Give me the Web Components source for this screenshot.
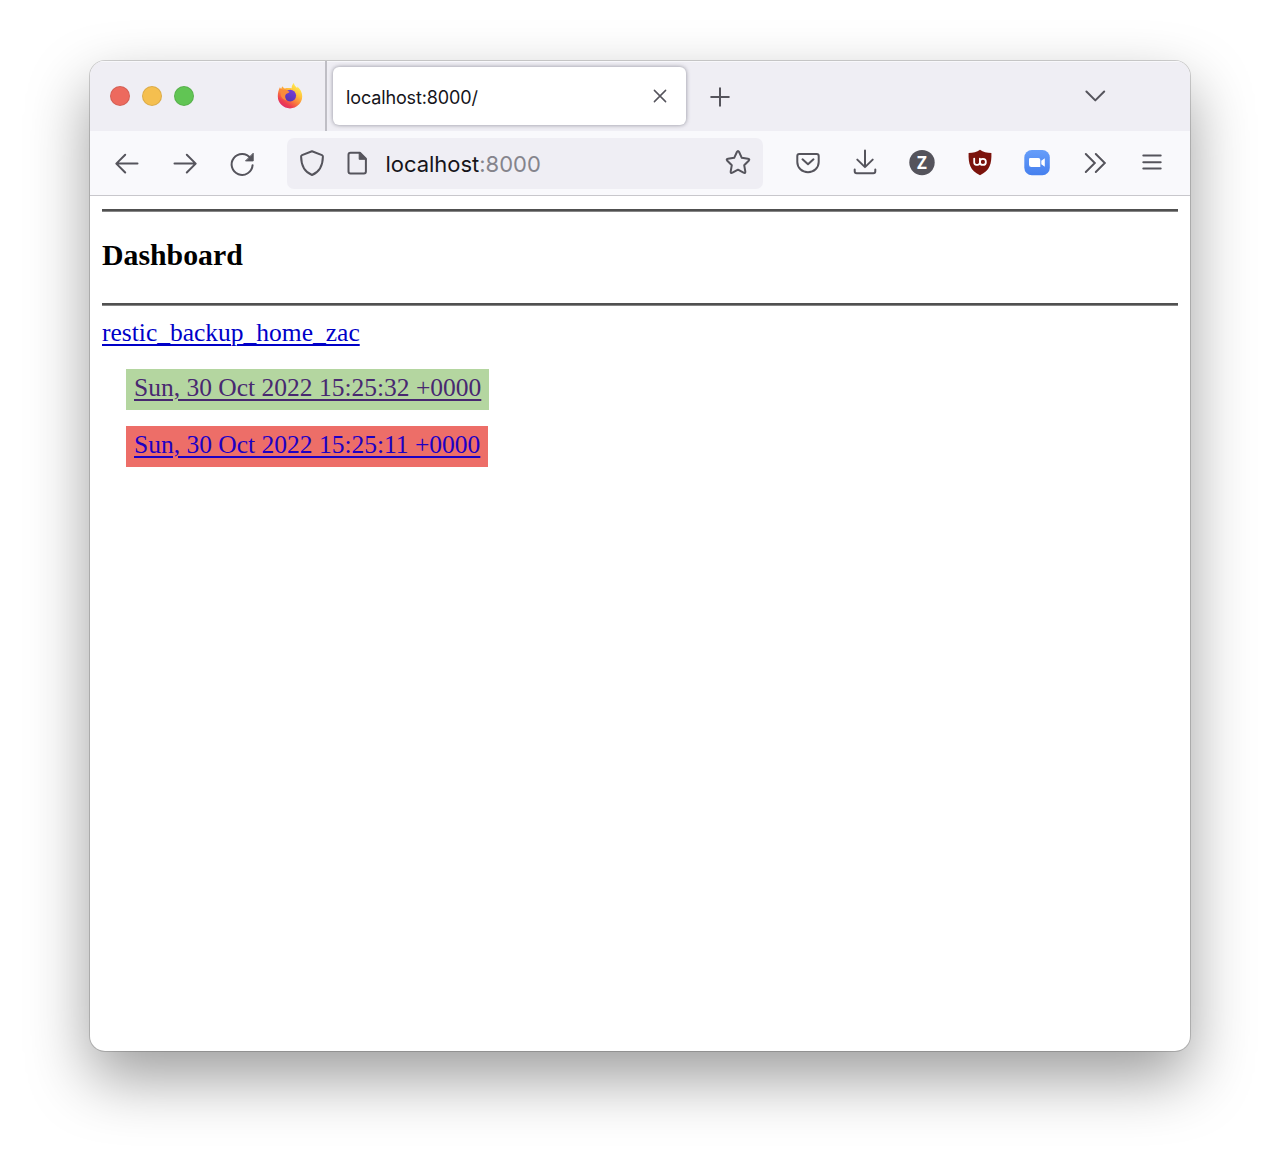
<!DOCTYPE html>
<html lang="en">
<head>
<meta charset="utf-8">
<title>localhost:8000/</title>
<style>
html,body{margin:0;height:1170px;background:#fff;overflow:hidden}
body{padding:61px 90px 0;box-sizing:border-box}
</style>
</head>
<body>
<browser-window>
  <tab-strip slot="chrome"></tab-strip>
  <nav-toolbar slot="chrome"></nav-toolbar>
  <dashboard-page>
    <backup-run status="ok">Sun, 30 Oct 2022 15:25:32 +0000</backup-run>
    <backup-run status="failed">Sun, 30 Oct 2022 15:25:11 +0000</backup-run>
  </dashboard-page>
</browser-window>
<script>
const define = (name, html) => customElements.define(name, class extends HTMLElement {
  constructor() {
    super();
    this.attachShadow({mode: 'open'}).innerHTML = html;
  }
});

const ICONS = {
  back: '<path d="M26.500 16.600H5.700M14.200 7.800 5.300 16.600l8.900 8.900"/>',
  forward: '<path d="M5.500 16.600h20.800M17.800 7.800l8.900 8.800-8.900 8.900"/>',
  reload: '<path d="M24.600 11.200A10.500 10.500 0 1 0 26.600 18.200"/><path d="M27.200 6.600v7.300h-7.300z" fill="currentColor" stroke-width="1"/>',
  shield: '<path d="M16 4.200 26 8.100q.9.400.9 1.400c-.1 8.600-3.400 15.500-10.900 18.500C8.500 25 5.200 18.100 5.100 9.500q0-1 .9-1.400z"/>',
  page: '<path d="M9.500 5.700h9.400l6 6V24.500q0 2-2 2H9.500q-2 0-2-2V7.700q0-2 2-2z"/><path d="M18.200 5.700v6.600h6.600z" fill="currentColor" stroke-width="1"/>',
  star: '<path d="M14.900 5q1.100-2 2.200 0l2.700 5.800 6.200.9q2.200.4.700 2l-4.500 4.500 1.100 6.300q.2 2.200-1.800 1.200L16 22.700l-5.500 3q-2 1-1.800-1.200l1.100-6.300-4.500-4.500q-1.500-1.600.7-2l6.200-.9z"/>',
  pocket: '<path d="M7.300 6.900h17.400q2 0 2 2V15c0 5.900-4.700 10.200-10.700 10.200S5.300 20.900 5.300 15V8.900q0-2 2-2z"/><path d="m10.500 12.300 5.500 5 5.500-5"/>',
  download: '<path d="M16 3.600v16.300M8.300 12.600l7.700 7.500 7.700-7.500M5.700 22.500v1.700q0 2 2 2h16.600q2 0 2-2v-1.700"/>',
  zotero: '<circle cx="16" cy="15.600" r="12.700" fill="currentColor" stroke="none"/><text x="16" y="21.500" text-anchor="middle" fill="#fff" stroke="none" font-family="Open Sans,sans-serif" font-weight="700" font-size="17">Z</text>',
  ublock: '<path d="M16 2.800c3 2.100 7 3.200 11.400 3.300.3 10.600-1.400 17.600-11.400 22.100C6 23.700 4.300 16.700 4.600 6.100 9 6 13 4.900 16 2.800z" fill="#7b130c" stroke="none"/><g stroke="#fff" stroke-width="1.800"><path d="M10.200 11.600v4q0 2.200 2.200 2.200h1.200q2 0 2.300-2.200v-4"/><circle cx="18.900" cy="14.900" r="3"/></g>',
  zoom: '<defs><linearGradient id="z" x2="0" y2="1"><stop stop-color="#669efa"/><stop offset="1" stop-color="#4680ee"/></linearGradient></defs><rect x="3.300" y="3" width="25.500" height="25.300" rx="7.500" fill="url(#z)" stroke="none"/><path d="M9.500 11h7.800q2 0 2 2v7h-8.900q-2.400 0-2.400-2.300V11.800q0-.8 1.500-.8zM20.300 13.800l3.500-2.600v8.600l-3.500-2.600z" fill="#fff" stroke="none"/>',
  overflow: '<path d="m6.800 7 9 9-9 9M16.800 7l9 9-9 9" stroke-linejoin="miter"/>',
  menu: '<path d="M7.300 8.600h17.400M7.300 15.200h17.400M7.300 21.600h17.400"/>',
  close: '<path d="m10.400 10.400 11.200 11.200M21.600 10.400 10.400 21.600" stroke-width="1.500"/>',
  plus: '<path d="M16 7.200v17.600M7.200 16h17.600"/>',
  chevron: '<path d="m7.400 11.500 8.900 8.900 8.900-8.900"/>',
  firefox: `<defs>
    <linearGradient id="f" x1=".85" y1=".1" x2=".25" y2="1"><stop stop-color="#ffee4f"/><stop offset=".3" stop-color="#ffc23c"/><stop offset=".58" stop-color="#fa7d3c"/><stop offset=".8" stop-color="#ee3f50"/><stop offset="1" stop-color="#dc2a6c"/></linearGradient>
    <linearGradient id="p" x1=".8" y1="0" x2=".3" y2="1"><stop stop-color="#7a3ed8"/><stop offset="1" stop-color="#5335b4"/></linearGradient></defs>
    <g stroke="none"><path d="M19.900 3.100c.3 2.500 2 3.600 3.300 5.100.3-.7.100-1.300 0-1.800 3 2.200 5 6 5 9.800a12.200 12.200 0 0 1-24.400 0c0-3.300.8-6.300 2.100-8.900.4.900.9 1.300 1.300 1.700.1-1.200.7-1.700 1.700-2.700.1 1.200.8 1.900 1.800 2.100 2.900-.8 5.200-.4 7-.2-.1-2.200.9-4 2.200-5.100z" fill="url(#f)"/>
    <circle cx="16.200" cy="15.600" r="5.900" fill="url(#p)"/>
    <path d="M5.900 8.800c1.800 1.500 3.400.8 4.800.6 2 .3 3.400 1.500 4.900 2.300-.3 1.400-2.400 1.400-3.400 2.300-.9.800-1.200 2.200-.9 3.600.2 1 .7 2 1.400 2.800-2.700-.4-5.400-2.700-5.900-5.200z" fill="#f98a3b"/></g>`
};

customElements.define('ui-icon', class extends HTMLElement {
  connectedCallback() {
    if (this.shadowRoot) return;
    this.attachShadow({mode: 'open'}).innerHTML = `
      <style>:host{display:flex;justify-content:center;align-items:center;flex:none;color:#55545c}svg{display:block;width:32px;height:32px}</style>
      <svg viewBox="0 0 32 32" fill="none" stroke="currentColor" stroke-width="2" stroke-linecap="round" stroke-linejoin="round">${ICONS[this.getAttribute('name')]}</svg>`;
  }
});

define('browser-window', `
  <style>
    :host{display:flex;flex-direction:column;width:1100px;height:990px;border-radius:15px;overflow:hidden;background:#fff;
      box-shadow:0 0 0 1px rgba(0,0,0,.17),0 27px 62px rgba(0,0,0,.39)}
  </style>
  <slot name="chrome"></slot><slot></slot>`);

define('tab-strip', `
  <style>
    :host{display:flex;height:70px;flex:none;background:#efeef4;box-shadow:inset 0 1px #f8f8fb}
    .lights{display:flex;gap:12px;padding:25px 0 0 19.500px;width:152px;box-sizing:border-box}
    .lights i{width:20px;height:20px;border-radius:50%;box-sizing:border-box;border:1px solid rgba(0,0,0,.1)}
    .pinned{display:flex;width:85px;align-items:center;justify-content:center;border-right:2px solid #bfbec5;padding:0 0 1px 13px;box-sizing:border-box}
    .tab{display:flex;align-items:center;margin:6px 0 0 6px;width:353px;height:58px;border-radius:6px;background:#fff;box-shadow:0 0 4px rgba(90,90,105,.65);box-sizing:border-box;padding:0 10px 0 13px;color:#15141a;font:18px/24px Inter,sans-serif;letter-spacing:-.13px}
    .tab span{flex:1;padding-top:3px}
    .new{margin-left:18px;padding-top:2px}
    .list{margin-left:auto;margin-right:79px}
  </style>
  <div class="lights"><i style="background:#ed6a5e"></i><i style="background:#f5bf4f"></i><i style="background:#61c554"></i></div>
  <div class="pinned"><ui-icon name="firefox"></ui-icon></div>
  <div class="tab"><span>localhost:8000/</span><ui-icon name="close"></ui-icon></div>
  <ui-icon class="new" name="plus"></ui-icon>
  <ui-icon class="list" name="chevron"></ui-icon>`);

define('nav-toolbar', `
  <style>
    :host{display:flex;align-items:center;height:65px;flex:none;box-sizing:border-box;background:#f9f9fc;border-bottom:1px solid #c8c7cc;padding-left:8.600px}
    .b{width:57.400px}
    .url{display:flex;align-items:center;width:476px;height:51px;background:#efeef4;border-radius:7px;margin:0 16px 0 16.200px;box-sizing:border-box;padding:0 9px 0 9.500px;font:22px/30px Inter,sans-serif;color:#15141a}
    .url span{flex:1;white-space:nowrap;padding-top:1px;letter-spacing:-.02px}
    .page{margin:0 12.500px 0 12.500px}
    .url b{font-weight:400;color:#85848c}
  </style>
  <ui-icon class="b" name="back"></ui-icon><ui-icon class="b" name="forward"></ui-icon><ui-icon class="b" name="reload"></ui-icon>
  <div class="url"><ui-icon name="shield"></ui-icon><ui-icon class="page" name="page"></ui-icon><span>localhost<b>:8000</b></span><ui-icon name="star"></ui-icon></div>
  <ui-icon class="b" name="pocket"></ui-icon><ui-icon class="b" name="download"></ui-icon><ui-icon class="b" name="zotero"></ui-icon><ui-icon class="b" name="ublock"></ui-icon><ui-icon class="b" name="zoom"></ui-icon><ui-icon class="b" name="overflow"></ui-icon><ui-icon class="b" name="menu"></ui-icon>`);

define('dashboard-page', `
  <style>
    :host{display:block;flex:1;padding:13px 12px 0;font:25.500px/29px "Liberation Serif",serif;color:#000}
    hr{height:3px;border:0;margin:0;background:linear-gradient(#505050 0 2px,#868686 2px)}
    h3{margin:26px 0 32px;font-size:29.800px;line-height:33px}
    a{color:#0000c8;text-decoration:underline;text-decoration-thickness:2px;text-underline-offset:3px}
    .job{margin-top:12px;height:29px}
    .runs{display:flex;flex-direction:column;align-items:flex-start;gap:16px;margin:22px 0 0 24px}
  </style>
  <hr><h3>Dashboard</h3><hr>
  <div class="job"><a>restic_backup_home_zac</a></div>
  <div class="runs"><slot></slot></div>`);

define('backup-run', `
  <style>
    :host{display:block;height:41px;box-sizing:border-box;padding:4px 8px 0;white-space:nowrap}
    :host([status=ok]){background:#b4d6a0;color:#482870}
    :host([status=failed]){background:#ed6e68;color:#1c00c4}
    a{text-decoration:underline;text-decoration-thickness:2px;text-underline-offset:3px}
  </style>
  <a><slot></slot></a>`);
</script>
</body>
</html>
